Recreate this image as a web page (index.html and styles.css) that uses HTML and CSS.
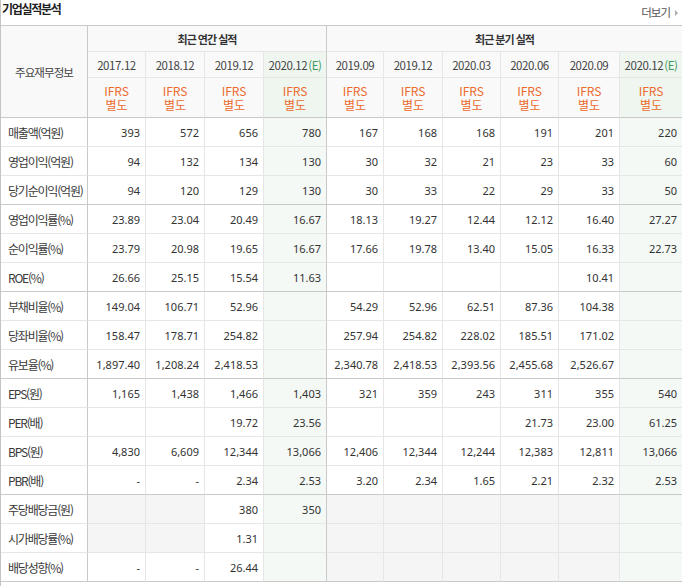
FILE: index.html
```html
<!DOCTYPE html>
<html lang="ko">
<head>
<meta charset="utf-8">
<title>기업실적분석</title>
<link rel="stylesheet" href="styles.css">
</head>
<body>
<div class="panel">
  <div class="panel-head">
    <h3 class="title">기업실적분석</h3>
    <a class="more" href="#">더보기<span class="more-arrow"></span></a>
  </div>
  <div class="fin">
    <div class="hd corner">주요재무정보</div>
    <div class="hd grp annual">최근 연간 실적</div>
    <div class="hd grp quarter">최근 분기 실적</div>

    <div class="hrow dates">
      <div>2017.12</div><div>2018.12</div><div>2019.12</div><div>2020.12<span class="e">(E)</span></div>
      <div>2019.09</div><div>2019.12</div><div>2020.03</div><div>2020.06</div><div>2020.09</div><div>2020.12<span class="e">(E)</span></div>
    </div>
    <div class="hrow ifrs">
      <div><span>IFRS</span><span>별도</span></div><div><span>IFRS</span><span>별도</span></div><div><span>IFRS</span><span>별도</span></div><div><span>IFRS</span><span>별도</span></div>
      <div><span>IFRS</span><span>별도</span></div><div><span>IFRS</span><span>별도</span></div><div><span>IFRS</span><span>별도</span></div><div><span>IFRS</span><span>별도</span></div><div><span>IFRS</span><span>별도</span></div><div><span>IFRS</span><span>별도</span></div>
    </div>

    <div class="row"><div>매출액(억원)</div><div>393</div><div>572</div><div>656</div><div>780</div><div>167</div><div>168</div><div>168</div><div>191</div><div>201</div><div>220</div></div>
    <div class="row"><div>영업이익(억원)</div><div>94</div><div>132</div><div>134</div><div>130</div><div>30</div><div>32</div><div>21</div><div>23</div><div>33</div><div>60</div></div>
    <div class="row end"><div>당기순이익(억원)</div><div>94</div><div>120</div><div>129</div><div>130</div><div>30</div><div>33</div><div>22</div><div>29</div><div>33</div><div>50</div></div>

    <div class="row"><div>영업이익률(%)</div><div>23.89</div><div>23.04</div><div>20.49</div><div>16.67</div><div>18.13</div><div>19.27</div><div>12.44</div><div>12.12</div><div>16.40</div><div>27.27</div></div>
    <div class="row"><div>순이익률(%)</div><div>23.79</div><div>20.98</div><div>19.65</div><div>16.67</div><div>17.66</div><div>19.78</div><div>13.40</div><div>15.05</div><div>16.33</div><div>22.73</div></div>
    <div class="row end"><div>ROE(%)</div><div>26.66</div><div>25.15</div><div>15.54</div><div>11.63</div><div></div><div></div><div></div><div></div><div>10.41</div><div></div></div>

    <div class="row"><div>부채비율(%)</div><div>149.04</div><div>106.71</div><div>52.96</div><div></div><div>54.29</div><div>52.96</div><div>62.51</div><div>87.36</div><div>104.38</div><div></div></div>
    <div class="row"><div>당좌비율(%)</div><div>158.47</div><div>178.71</div><div>254.82</div><div></div><div>257.94</div><div>254.82</div><div>228.02</div><div>185.51</div><div>171.02</div><div></div></div>
    <div class="row end"><div>유보율(%)</div><div>1,897.40</div><div>1,208.24</div><div>2,418.53</div><div></div><div>2,340.78</div><div>2,418.53</div><div>2,393.56</div><div>2,455.68</div><div>2,526.67</div><div></div></div>

    <div class="row"><div>EPS(원)</div><div>1,165</div><div>1,438</div><div>1,466</div><div>1,403</div><div>321</div><div>359</div><div>243</div><div>311</div><div>355</div><div>540</div></div>
    <div class="row"><div>PER(배)</div><div></div><div></div><div>19.72</div><div>23.56</div><div></div><div></div><div></div><div>21.73</div><div>23.00</div><div>61.25</div></div>
    <div class="row"><div>BPS(원)</div><div>4,830</div><div>6,609</div><div>12,344</div><div>13,066</div><div>12,406</div><div>12,344</div><div>12,244</div><div>12,383</div><div>12,811</div><div>13,066</div></div>
    <div class="row end"><div>PBR(배)</div><div>-</div><div>-</div><div>2.34</div><div>2.53</div><div>3.20</div><div>2.34</div><div>1.65</div><div>2.21</div><div>2.32</div><div>2.53</div></div>

    <div class="row div"><div>주당배당금(원)</div><div></div><div></div><div>380</div><div>350</div><div></div><div></div><div></div><div></div><div></div><div></div></div>
    <div class="row div"><div>시가배당률(%)</div><div></div><div></div><div>1.31</div><div></div><div></div><div></div><div></div><div></div><div></div><div></div></div>
    <div class="row div end"><div>배당성향(%)</div><div>-</div><div>-</div><div>26.44</div><div></div><div></div><div></div><div></div><div></div><div></div><div></div></div>
  </div>
</div>
</body>
</html>
```

FILE: styles.css
```css
* {
  box-sizing: border-box;
}

body {
  margin: 0;
  background: #fff;
  font-family: "Noto Sans CJK KR", sans-serif;
  color: #333;
}

.panel {
  border-left: 1px solid #c4c4c4;
  min-height: 586px;
}

.panel-head {
  display: flex;
  justify-content: space-between;
  align-items: flex-start;
  height: 25px;
}

.title {
  margin: 0;
  padding: 0 0 0 1px;
  font-size: 12px;
  line-height: 17px;
  font-weight: 700;
  letter-spacing: -1.3px;
  color: #222;
}

.more {
  display: flex;
  align-items: center;
  padding: 5px 9px 0 0;
  font-size: 11.5px;
  line-height: 15px;
  letter-spacing: -1px;
  color: #555;
  text-decoration: none;
}

.more-arrow {
  width: 0;
  height: 0;
  margin-left: 5px;
  border-left: 3px solid #aaa;
  border-top: 3px solid transparent;
  border-bottom: 3px solid transparent;
}

.fin {
  display: grid;
  width: 681px;
  grid-template-columns: 87px 58px 59px 59px 63px 57px 59px 58px 58px 61px 62px;
  grid-template-rows: 26px 26px 40px repeat(16, 29px);
  border-top: 1px solid #c9c9c9;
}

.hrow,
.row {
  display: contents;
}

/* header */
.hd,
.hrow > div {
  display: flex;
  align-items: center;
  justify-content: center;
  text-align: center;
  background: #f9f9f9;
  border-right: 1px solid #e6e6e6;
  border-bottom: 1px solid #e6e6e6;
  color: #444;
}

.corner {
  grid-row: span 3;
  border-right-color: #c9c9c9;
  border-bottom-color: #c9c9c9;
  font-size: 11.5px;
  letter-spacing: -0.9px;
}

.grp {
  font-size: 11px;
  font-weight: 700;
  letter-spacing: -1px;
  color: #333;
}

.annual {
  grid-column: span 4;
  border-right-color: #c9c9c9;
}

.quarter {
  grid-column: span 6;
  border-right: 0;
}

.dates > div {
  font-size: 11.5px;
  letter-spacing: -0.4px;
  padding-top: 1px;
}

.e {
  color: #3f9a5c;
  margin-left: 1px;
}

.ifrs > div {
  flex-direction: column;
  gap: 1px;
  font-size: 12px;
  color: #ec6a2c;
  border-bottom-color: #c9c9c9;
}

.ifrs span {
  display: block;
  line-height: 13px;
}

.hrow > div:nth-child(4) {
  border-right-color: #c9c9c9;
  background: #eff6f0;
}

.hrow > div:nth-child(10) {
  border-right: 0;
  background: #eff6f0;
}

/* body rows */
.row > div {
  display: flex;
  align-items: center;
  justify-content: flex-end;
  padding-right: 5px;
  background: #fff;
  border-right: 1px solid #e6e6e6;
  border-bottom: 1px solid #e6e6e6;
  font-family: "Noto Sans", sans-serif;
  font-size: 11px;
  color: #333;
}

.row > div:first-child {
  justify-content: flex-start;
  padding: 0 0 0 7px;
  border-right-color: #c9c9c9;
  font-family: "Noto Sans CJK KR", sans-serif;
  font-size: 12px;
  letter-spacing: -1.2px;
  color: #3a3a3a;
}

.row > div:nth-child(5) {
  border-right-color: #c9c9c9;
}

.row > div:last-child {
  border-right: 0;
}

.row.end > div {
  border-bottom-color: #c9c9c9;
}

.row.div > div:empty {
  background: #f5f5f5;
}

.row > div:nth-child(5),
.row > div:nth-child(11),
.row.div > div:nth-child(5):empty,
.row.div > div:nth-child(11):empty {
  background: #f4f9f5;
}
```
